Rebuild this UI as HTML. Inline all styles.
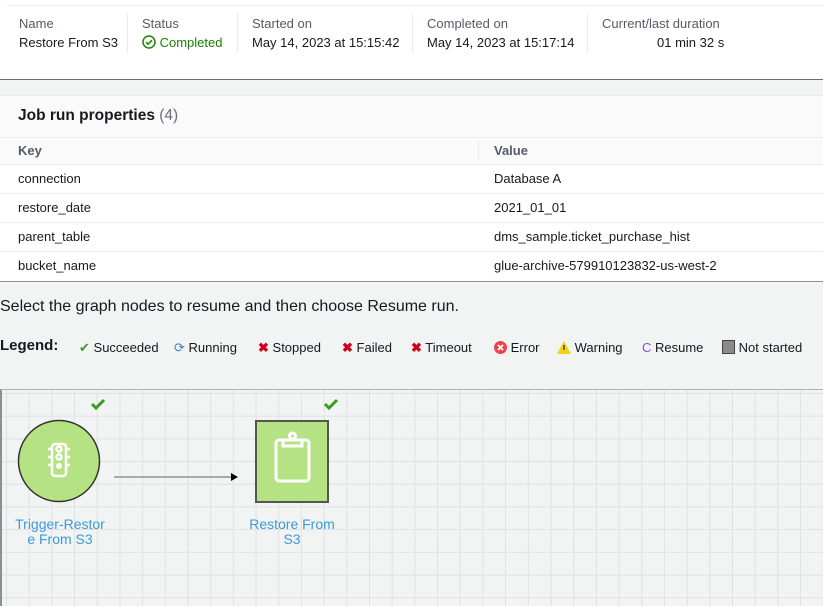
<!DOCTYPE html>
<html><head><style>
*{margin:0;padding:0;box-sizing:border-box}
body{width:823px;height:606px;overflow:hidden;background:#f2f3f3;font-family:"Liberation Sans",sans-serif;color:#16191f;position:relative}
.top{position:absolute;left:0;top:0;width:823px;height:80px;background:#fff;border-bottom:1px solid #687078}
.top .line{position:absolute;left:7px;right:0;top:5px;border-top:1px solid #eaeded}
.col{position:absolute;top:14px;height:40px;font-size:13px;line-height:19px}
.col .l{color:#545b64}
.sep{position:absolute;top:13px;height:40px;border-left:1px solid #eaeded}
.panel{position:absolute;left:0;top:95px;width:823px;height:187px;background:#fff;border-bottom:1px solid #879196;border-top:1px solid #eaeded}
.ph{height:42px;background:#fafafa;font-weight:bold;font-size:15.5px;padding:11px 18px;border-bottom:1px solid #eaeded}
.ph span{font-weight:normal;color:#687078}
.row{height:29px;border-bottom:1px solid #eaeded;font-size:13px;position:relative;line-height:28px}
.row div{position:absolute;top:0}
.hd{background:#fafafa;height:27px;font-weight:bold;color:#545b64;line-height:26px}
.row:last-child{border-bottom:none}
.sel{position:absolute;left:0;top:298px;font-size:16px}
.leg{position:absolute;left:0;top:338px;font-size:13px;white-space:nowrap}
.leg b{font-size:15px;position:absolute;left:0;top:-1px}
.li{position:absolute;top:2px}
.graph{position:absolute;left:0;top:389px;width:823px;height:217px;border-top:1px solid #aab7b8;border-left:2px solid #879196;
background-color:#f2f3f3;background-image:linear-gradient(#dfe2e2 1px,transparent 1px),linear-gradient(90deg,#dfe2e2 1px,transparent 1px);background-size:22.7px 22.7px;background-position:4px 3px}
.lbl{position:absolute;color:#3b9bd6;font-size:14px;text-align:center;line-height:15px}
</style></head><body>
<div class="top"><div class="line"></div>
<div class="col" style="left:19px"><div class="l">Name</div><div>Restore From S3</div></div>
<div class="sep" style="left:127px"></div>
<div class="col" style="left:142px"><div class="l">Status</div><div style="color:#1d8102"><svg width="14" height="14" viewBox="0 0 14 14" style="vertical-align:-2px"><circle cx="7" cy="7" r="6" fill="none" stroke="#1d8102" stroke-width="1.5"/><path d="M4 7.2l2 2 4-4" fill="none" stroke="#1d8102" stroke-width="1.5"/></svg> Completed</div></div>
<div class="sep" style="left:237px"></div>
<div class="col" style="left:252px"><div class="l">Started on</div><div>May 14, 2023 at 15:15:42</div></div>
<div class="sep" style="left:412px"></div>
<div class="col" style="left:427px"><div class="l">Completed on</div><div>May 14, 2023 at 15:17:14</div></div>
<div class="sep" style="left:587px"></div>
<div class="col" style="left:602px"><div class="l">Current/last duration</div><div style="padding-left:55px">01 min 32 s</div></div>
</div>
<div class="panel">
<div class="ph">Job run properties <span>(4)</span></div>
<div class="row hd"><div style="left:18px">Key</div><div style="left:478px;height:20px;top:3px;border-left:1px solid #eaeded"></div><div style="left:494px">Value</div></div>
<div class="row"><div style="left:18px">connection</div><div style="left:494px">Database A</div></div>
<div class="row"><div style="left:18px">restore_date</div><div style="left:494px">2021_01_01</div></div>
<div class="row"><div style="left:18px">parent_table</div><div style="left:494px">dms_sample.ticket_purchase_hist</div></div>
<div class="row"><div style="left:18px">bucket_name</div><div style="left:494px">glue-archive-579910123832-us-west-2</div></div>
</div>
<div class="sel">Select the graph nodes to resume and then choose Resume run.</div>
<div class="leg"><b>Legend:</b>
<span class="li" style="left:79px"><span style="color:#3a9c1f">✔</span> Succeeded</span>
<span class="li" style="left:174px"><span style="color:#3b82d6">⟳</span> Running</span>
<span class="li" style="left:258px"><span style="color:#d0021b;font-weight:bold">✖</span> Stopped</span>
<span class="li" style="left:342px"><span style="color:#d0021b;font-weight:bold">✖</span> Failed</span>
<span class="li" style="left:411px"><span style="color:#d0021b;font-weight:bold">✖</span> Timeout</span>
<span class="li" style="left:494px"><svg width="13" height="13" viewBox="0 0 13 13" style="vertical-align:-2px"><circle cx="6.5" cy="6.5" r="6.5" fill="#e8464a"/><path d="M4 4l5 5M9 4l-5 5" stroke="#fff" stroke-width="1.8"/></svg> Error</span>
<span class="li" style="left:557px"><svg width="14" height="13" viewBox="0 0 14 13" style="vertical-align:-2px"><path d="M7 0L14 13H0z" fill="#f2d40c"/><path d="M7 4v5" stroke="#333" stroke-width="1.3"/></svg> Warning</span>
<span class="li" style="left:642px"><span style="color:#8a4cf0">C</span> Resume</span>
<span class="li" style="left:722px"><span style="display:inline-block;width:13px;height:14px;background:#8a8a8a;border:1px solid #444;vertical-align:-2px"></span> Not started</span>
</div>
<div class="graph">
<svg width="823" height="217" style="position:absolute;left:-2px;top:-1px">
<path d="M92 15l4 4 8-8" fill="none" stroke="#3a9c1f" stroke-width="3"/>
<path d="M325 15l4 4 8-8" fill="none" stroke="#3a9c1f" stroke-width="3"/>
<circle cx="59" cy="72" r="40.5" fill="#b5e384" stroke="#333" stroke-width="1.5"/>
<g fill="none" stroke="#fff" stroke-width="2.5"><rect x="52" y="55" width="14" height="32" rx="3"/><path d="M52 60h-4M52 68h-4M52 76h-4M66 60h4M66 68h4M66 76h4"/><circle cx="59" cy="60" r="2.5"/><circle cx="59" cy="68" r="2.5"/></g>
<circle cx="59" cy="77" r="3" fill="#fff"/>
<path d="M114 88H231" stroke="#aaa" stroke-width="2"/><path d="M231 84l7 4-7 4z" fill="#000"/>
<rect x="256" y="32" width="72" height="81" fill="#b5e384" stroke="#555" stroke-width="2"/>
<g fill="none" stroke="#fff" stroke-width="3"><rect x="276" y="51" width="33" height="41" rx="3"/><path d="M283 51v6h19v-6"/><circle cx="292.5" cy="47" r="3"/></g>
</svg>
<div class="lbl" style="left:8px;top:127px;width:100px">Trigger-Restor<br>e From S3</div>
<div class="lbl" style="left:240px;top:127px;width:100px">Restore From<br>S3</div>
</div>
</body></html>
